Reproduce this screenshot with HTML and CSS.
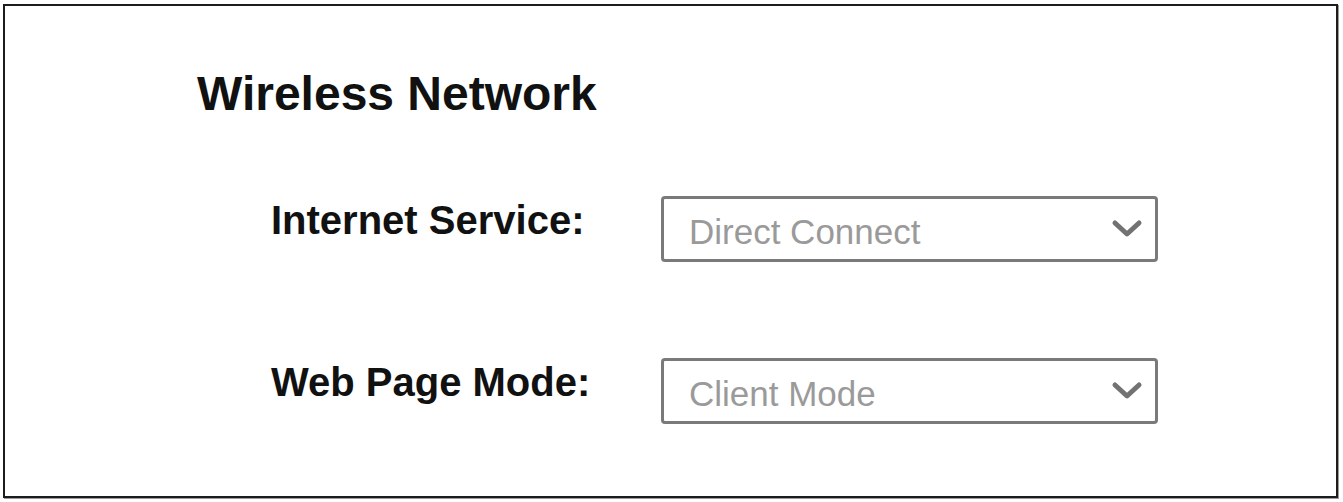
FILE: index.html
```html
<!DOCTYPE html>
<html lang="en">
<head>
    <meta charset="UTF-8">
    <meta name="viewport" content="width=device-width, initial-scale=1.0">
    <title>Wireless Network</title>
    <link rel="stylesheet" href="styles.css">
</head>
<body>
    <div class="panel">
        <h1 class="panel-title">Wireless Network</h1>

        <div class="settings">
            <label class="settings-label">Internet Service:</label>
            <div class="dropdown">
                <span class="dropdown-value">Direct Connect</span>
                <svg class="dropdown-arrow" width="32" height="20" viewBox="0 0 32 20" fill="none" stroke="currentColor" stroke-width="5" stroke-linecap="round" stroke-linejoin="round"><polyline points="4 4 16 15 28 4"></polyline></svg>
            </div>

            <label class="settings-label">Web Page Mode:</label>
            <div class="dropdown">
                <span class="dropdown-value">Client Mode</span>
                <svg class="dropdown-arrow" width="32" height="20" viewBox="0 0 32 20" fill="none" stroke="currentColor" stroke-width="5" stroke-linecap="round" stroke-linejoin="round"><polyline points="4 4 16 15 28 4"></polyline></svg>
            </div>
        </div>
    </div>
</body>
</html>
```

FILE: styles.css
```css
:root {
    --text-primary: #111111;
    --text-muted: #9a9a9a;
    --border-frame: #1c1c1c;
    --border-field: #7a7a7a;
    --arrow-color: #727272;
    --font-family-sans: 'Liberation Sans', Arial, sans-serif;
}

*, *::before, *::after {
    box-sizing: border-box;
    margin: 0;
    padding: 0;
}

body {
    font-family: var(--font-family-sans);
    background-color: #ffffff;
    color: var(--text-primary);
}

.panel {
    height: 494px;
    margin: 4px 5px 4px 3px;
    border: 2px solid var(--border-frame);
    box-shadow: 1px 1px 0 #9a9a9a;
    padding: 60px 0 0 192px;
}

.panel-title {
    font-size: 48px;
    line-height: 56px;
    font-weight: 700;
    margin-bottom: 74px;
}

.settings {
    display: grid;
    grid-template-columns: 390px 497px;
    row-gap: 96px;
    margin-left: 74px;
}

.settings-label {
    font-size: 40px;
    line-height: 48px;
    font-weight: 700;
}

.dropdown {
    display: flex;
    align-items: center;
    justify-content: space-between;
    height: 66px;
    padding: 6px 12px 0 25px;
    border: 3px solid var(--border-field);
    border-radius: 4px;
}

.dropdown-value {
    font-size: 35px;
    color: var(--text-muted);
}

.dropdown-arrow {
    color: var(--arrow-color);
    margin-top: -6px;
}
```
